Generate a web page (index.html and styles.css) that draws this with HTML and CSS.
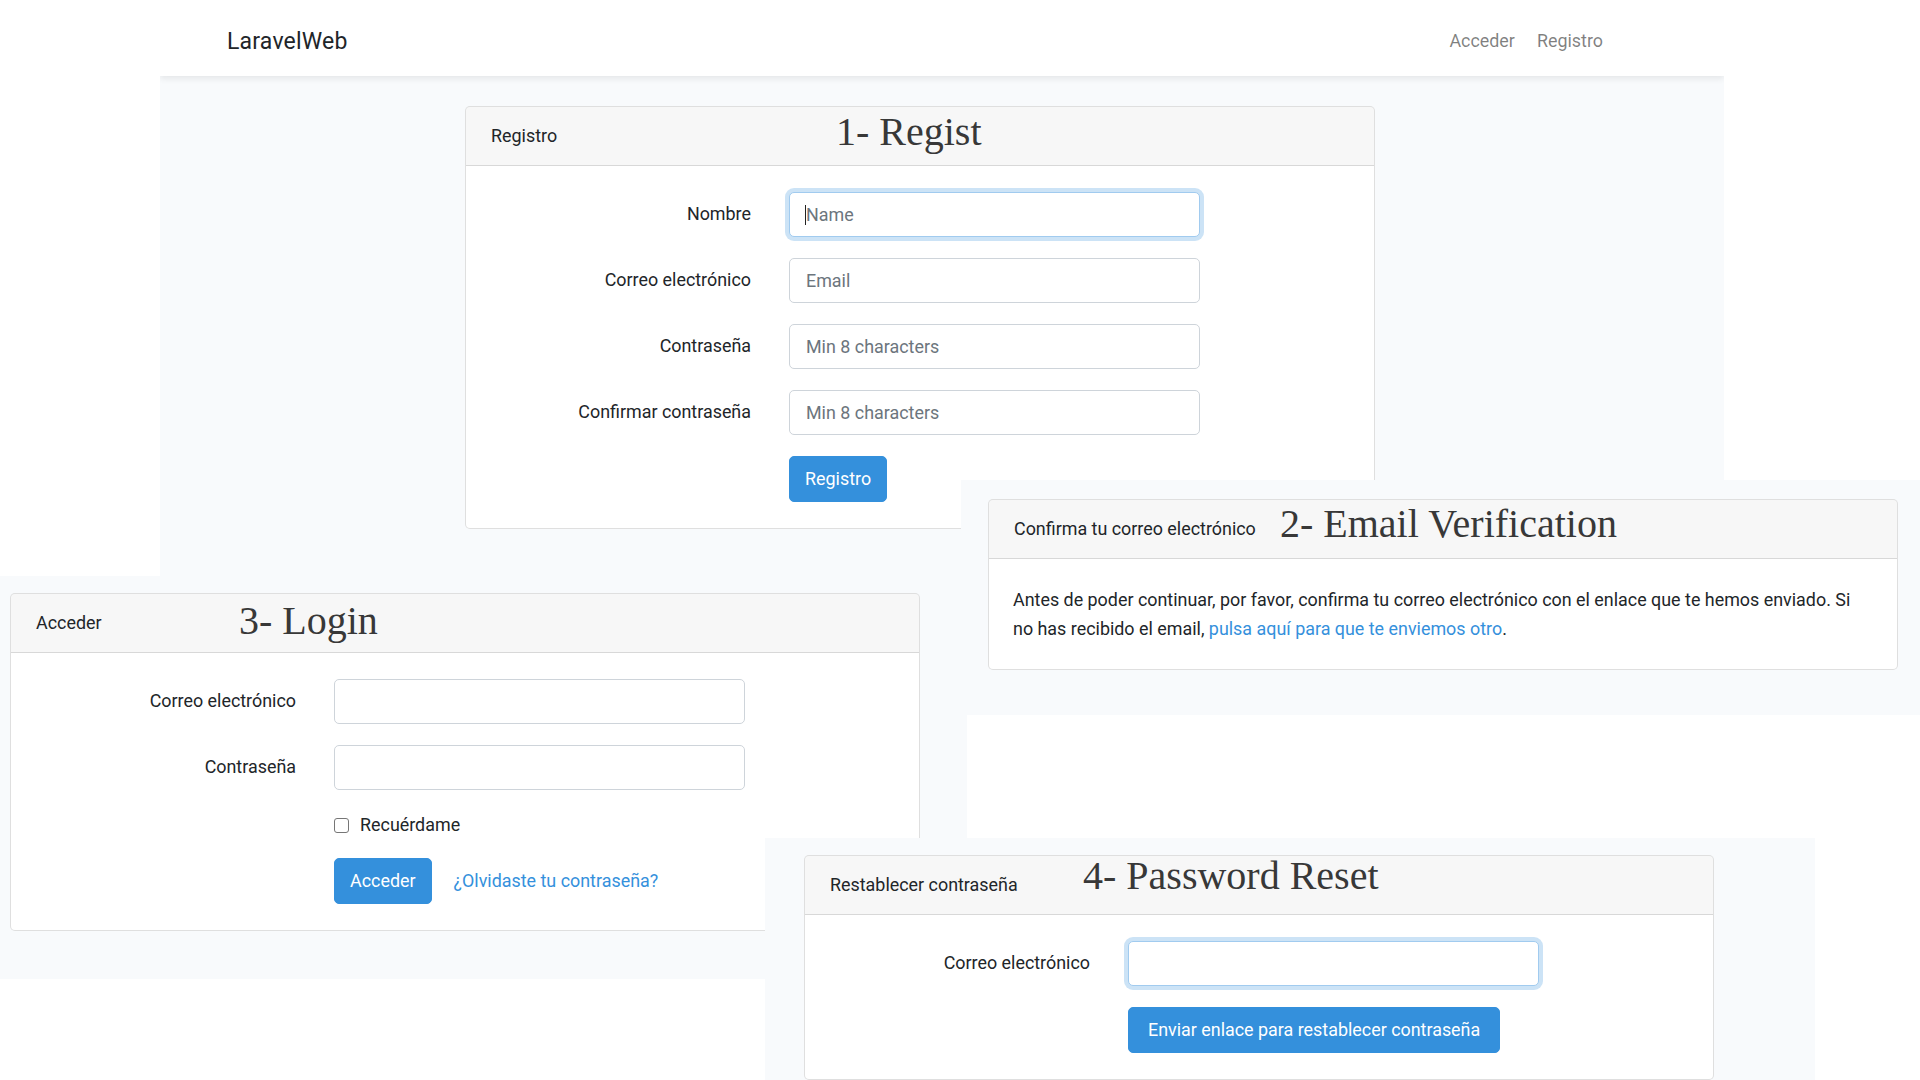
FILE: index.html
```html
<!DOCTYPE html>
<html lang="es">
<head>
<meta charset="utf-8">
<title>LaravelWeb – Autenticación</title>
<link rel="stylesheet" href="styles.css">
</head>
<body>
<div class="canvas">

  <section class="shot shot-register">
    <nav class="navbar">
      <a class="brand" href="#">LaravelWeb</a>
      <ul class="nav-links">
        <li><a href="#">Acceder</a></li>
        <li><a href="#">Registro</a></li>
      </ul>
    </nav>
    <main class="shot-main">
      <div class="card">
        <div class="card-header">
          <span>Registro</span>
          <span class="title title-register">1- Regist</span>
        </div>
        <form class="card-body form">
          <div class="row">
            <label class="label">Nombre</label>
            <div class="field">
              <input class="control is-focused" type="text" placeholder="Name">
              <span class="caret"></span>
            </div>
          </div>
          <div class="row">
            <label class="label">Correo electrónico</label>
            <div class="field"><input class="control" type="email" placeholder="Email"></div>
          </div>
          <div class="row">
            <label class="label">Contraseña</label>
            <div class="field"><input class="control" type="password" placeholder="Min 8 characters"></div>
          </div>
          <div class="row">
            <label class="label">Confirmar contraseña</label>
            <div class="field"><input class="control" type="password" placeholder="Min 8 characters"></div>
          </div>
          <div class="row">
            <span></span>
            <div class="actions"><button class="btn" type="button">Registro</button></div>
          </div>
        </form>
      </div>
    </main>
  </section>

  <section class="shot shot-login">
    <div class="card">
      <div class="card-header">
        <span>Acceder</span>
        <span class="title title-login">3- Login</span>
      </div>
      <form class="card-body form">
        <div class="row">
          <label class="label">Correo electrónico</label>
          <div class="field"><input class="control" type="email"></div>
        </div>
        <div class="row">
          <label class="label">Contraseña</label>
          <div class="field"><input class="control" type="password"></div>
        </div>
        <div class="row row-check">
          <span></span>
          <label class="check"><span class="checkbox"></span>Recuérdame</label>
        </div>
        <div class="row">
          <span></span>
          <div class="actions">
            <button class="btn" type="button">Acceder</button>
            <a class="link link-forgot" href="#">¿Olvidaste tu contraseña?</a>
          </div>
        </div>
      </form>
    </div>
  </section>

  <section class="shot shot-verify">
    <div class="card">
      <div class="card-header">
        <span>Confirma tu correo electrónico</span>
        <span class="title title-verify">2- Email Verification</span>
      </div>
      <div class="card-body text-body">
        Antes de poder continuar, por favor, confirma tu correo electrónico con el enlace que te hemos enviado. Si<br>no has recibido el email, <a class="link" href="#">pulsa aquí para que te enviemos otro</a>.
      </div>
    </div>
  </section>

  <section class="shot shot-reset">
    <div class="card">
      <div class="card-header">
        <span>Restablecer contraseña</span>
        <span class="title title-reset">4- Password Reset</span>
      </div>
      <form class="card-body form">
        <div class="row">
          <label class="label">Correo electrónico</label>
          <div class="field"><input class="control is-focused" type="email"></div>
        </div>
        <div class="row">
          <span></span>
          <div class="actions"><button class="btn btn-wide" type="button">Enviar enlace para restablecer contraseña</button></div>
        </div>
      </form>
    </div>
  </section>

</div>
</body>
</html>
```
FILE: styles.css
```css
* { box-sizing: border-box; }

html, body {
  margin: 0;
  padding: 0;
  background: #ffffff;
}

body {
  font-family: Roboto, "Noto Sans", "Liberation Sans", sans-serif;
  font-size: 17.9px;
  line-height: 1.6;
  color: #212529;
}

a { text-decoration: none; }

.canvas {
  position: relative;
  width: 1920px;
  height: 1080px;
  overflow: hidden;
  background: #ffffff;
}

/* each pasted screenshot */
.shot {
  position: absolute;
  background: #f8fafc;
  overflow: hidden;
}

.shot-register { left: 160px; top: 0; width: 1564px; height: 576px; z-index: 1; }
.shot-login    { left: 0; top: 576px; width: 967px; height: 403px; padding: 17px 0 0 10px; z-index: 2; }
.shot-verify   { left: 961px; top: 480px; width: 959px; height: 235px; padding: 19px 0 0 27px; z-index: 3; }
.shot-reset    { left: 765px; top: 838px; width: 1050px; height: 242px; padding: 17px 0 0 39px; z-index: 4; }

/* navbar */
.navbar {
  height: 76px;
  background: #ffffff;
  box-shadow: 0 3px 6px rgba(0, 0, 0, 0.075);
  display: flex;
  align-items: center;
  justify-content: space-between;
  padding: 6px 110px 0 67px;
  position: relative;
}

.brand {
  color: #212529;
  font-size: 23px;
  line-height: 1;
  letter-spacing: 0.2px;
}

.nav-links {
  list-style: none;
  margin: 0;
  padding: 0;
  display: flex;
}

.nav-links a {
  display: block;
  padding: 0 11px;
  color: rgba(0, 0, 0, 0.5);
}

.shot-main {
  padding: 30px 0 0 305px;
}

/* card */
.card {
  width: 910px;
  background: #ffffff;
  border: 1px solid rgba(0, 0, 0, 0.125);
  border-radius: 5px;
}

.card-header {
  position: relative;
  height: 59px;
  padding: 0 25px;
  display: flex;
  align-items: center;
  background: rgba(0, 0, 0, 0.03);
  border-bottom: 1px solid rgba(0, 0, 0, 0.125);
  border-radius: 4px 4px 0 0;
}

.title {
  position: absolute;
  font-family: "Liberation Serif", "Times New Roman", serif;
  font-size: 40px;
  line-height: 40px;
  color: #383838;
  white-space: nowrap;
}

.title-register { left: 370px; top: 5px; }
.title-verify   { left: 291px; top: 4px; }
.title-login    { left: 228px; top: 7px; }
.title-reset    { left: 278px; top: 0; }

.card-body {
  padding: 26px 24px;
}

/* forms */
.form {
  display: flex;
  flex-direction: column;
  gap: 21px;
  margin: 0;
}

.row {
  display: grid;
  grid-template-columns: 261px 411px;
  column-gap: 38px;
  align-items: center;
}

.label {
  text-align: right;
  white-space: nowrap;
}

.field { position: relative; }

.control {
  display: block;
  width: 411px;
  height: 45px;
  padding: 0 16px;
  font: inherit;
  color: #495057;
  background: #ffffff;
  border: 1px solid #ced4da;
  border-radius: 5px;
  outline: none;
}

.control::placeholder { color: #6c757d; opacity: 1; }

.control.is-focused {
  border-color: #a1cbef;
  box-shadow: 0 0 0 4px rgba(52, 144, 220, 0.25);
}

.caret {
  position: absolute;
  left: 16px;
  top: 13px;
  width: 1px;
  height: 20px;
  background: #222222;
}

.row-check { height: 26px; }

.check {
  display: flex;
  align-items: center;
  gap: 11px;
  white-space: nowrap;
}

.checkbox {
  width: 15px;
  height: 15px;
  border: 1px solid #767676;
  border-radius: 3px;
  background: #ffffff;
}

.actions {
  display: flex;
  align-items: center;
  white-space: nowrap;
}

.btn {
  height: 46px;
  padding: 0 15px;
  font: inherit;
  color: #ffffff;
  background: #3490dc;
  border: 1px solid #3490dc;
  border-radius: 5px;
}

.btn-wide { padding: 0 19px; }

.link { color: #3490dc; }

.link-forgot { margin-left: 22px; }

.text-body {
  line-height: 29px;
}
```
